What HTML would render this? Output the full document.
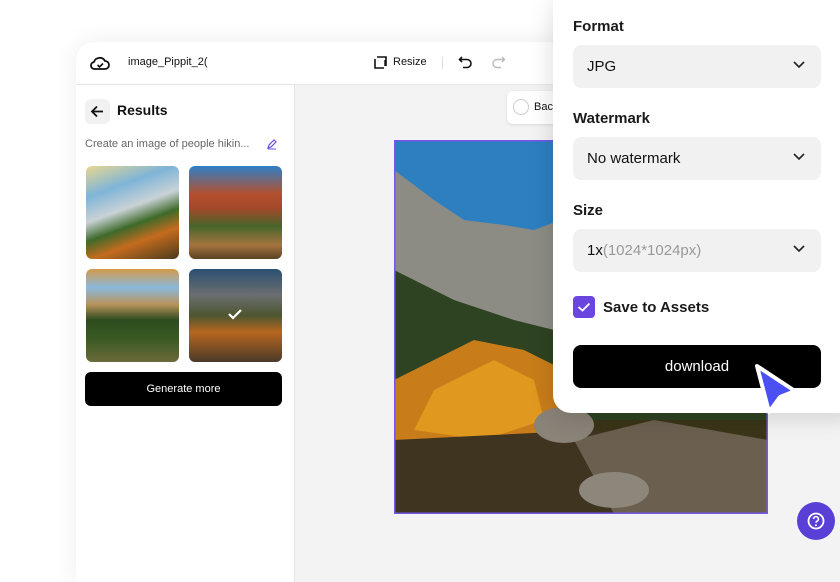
<!DOCTYPE html>
<html><head><style>
*{box-sizing:border-box;margin:0;padding:0}
body{width:840px;height:560px;overflow:hidden;background:#fff;font-family:"Liberation Sans",sans-serif;position:relative;color:#111}
.win{position:absolute;left:76px;top:42px;width:800px;height:540px;background:#f3f3f4;border-radius:18px 0 0 0;box-shadow:0 0 24px rgba(0,0,0,.08);overflow:hidden}
.hdr{position:absolute;left:0;top:0;right:0;height:43px;background:#fff;border-bottom:1px solid #e6e6e6}
.side{position:absolute;left:0;top:43px;width:219px;bottom:0;background:#fff;border-right:1px solid #e6e6e6}
.t{position:absolute;white-space:nowrap}
.thumb{position:absolute;width:93px;height:93px;border-radius:6px;overflow:hidden}
.panel{position:absolute;left:553px;top:0;width:300px;height:413px;background:#fff;border-radius:0 0 0 18px;box-shadow:0 4px 24px rgba(0,0,0,.15)}
.sel{position:absolute;left:20px;width:248px;height:43px;background:#f1f1f1;border-radius:8px;font-size:15px;padding:13px 0 0 14px}
.lab{position:absolute;left:20px;font-size:15px;font-weight:bold;color:#1a1a1a}
.chev{position:absolute;right:16px;top:16px}
</style></head><body>
<div class="win">
 <div class="hdr">
  <svg style="position:absolute;left:14px;top:12px" width="20" height="18" viewBox="0 0 20 18"><path d="M5 15h10a4 4 0 0 0 0-8 6 6 0 0 0-11 1 3.5 3.5 0 0 0 1 7z" fill="none" stroke="#111" stroke-width="1.8"/><path d="M7.5 11l2 2 3.5-3.5" fill="none" stroke="#111" stroke-width="1.6"/></svg>
  <div class="t" style="left:52px;top:14px;font-size:11px">image_Pippit_2(</div>
  <svg style="position:absolute;left:297px;top:13px" width="15" height="15" viewBox="0 0 15 15"><path d="M2 4v9h9M4 2h9v9" fill="none" stroke="#111" stroke-width="1.6"/><path d="M12 5v6" stroke="#111" stroke-width="1.4"/></svg>
  <div class="t" style="left:317px;top:14px;font-size:11px">Resize</div>
  <div style="position:absolute;left:366px;top:15px;width:1px;height:12px;background:#ddd"></div>
  <svg style="position:absolute;left:382px;top:12px" width="16" height="16" viewBox="0 0 16 16"><path d="M4 3L1.5 5.5 4 8M2 5.5h7a4 4 0 0 1 0 8H5" fill="none" stroke="#111" stroke-width="1.6"/></svg>
  <svg style="position:absolute;left:414px;top:12px" width="16" height="16" viewBox="0 0 16 16"><path d="M12 3l2.5 2.5L12 8M14 5.5H7a4 4 0 0 0 0 8h4" fill="none" stroke="#bbb" stroke-width="1.4"/></svg>
 </div>
 <div class="side">
  <div style="position:absolute;left:9px;top:14px;width:25px;height:25px;background:#f1f1f1;border-radius:6px"></div>
  <svg style="position:absolute;left:14px;top:19px" width="15" height="15" viewBox="0 0 15 15"><path d="M13 7.5H2M7 2.5l-5 5 5 5" fill="none" stroke="#111" stroke-width="1.8"/></svg>
  <div class="t" style="left:41px;top:17px;font-size:14px;font-weight:bold">Results</div>
  <div class="t" style="left:9px;top:53px;font-size:11px;color:#666">Create an image of people hikin...</div>
  <svg style="position:absolute;left:190px;top:53px" width="12" height="12" viewBox="0 0 12 12"><path d="M2 10l1-3 5-5 2 2-5 5z" fill="none" stroke="#6a4ee6" stroke-width="1.2"/><path d="M2 11h8" stroke="#6a4ee6"/></svg>
  <div class="thumb" style="left:10px;top:81px;background:linear-gradient(160deg,#e8d890 0%,#7fb4d8 25%,#c9d2d6 45%,#3e6a2a 60%,#c46b1e 75%,#4a3a1c 100%)"></div>
  <div class="thumb" style="left:113px;top:81px;background:linear-gradient(180deg,#2f7fc6 0%,#b4502e 30%,#a4482a 45%,#47662a 65%,#a57440 85%,#5a4224 100%)"></div>
  <div class="thumb" style="left:10px;top:184px;background:linear-gradient(180deg,#d29a4a 0%,#8ab8dc 20%,#b8935a 38%,#2d4c1f 55%,#3a5a22 75%,#6b6a3a 100%)"></div>
  <div class="thumb" style="left:113px;top:184px;background:linear-gradient(180deg,#2b5072 0%,#6b6e70 28%,#4d5630 50%,#b7661e 68%,#4a3a2a 100%)">
   <svg style="position:absolute;left:38px;top:39px" width="16" height="12" viewBox="0 0 16 12"><path d="M2 6l4 4 8-8" fill="none" stroke="#fff" stroke-width="2.2"/></svg></div>
  <div style="position:absolute;left:9px;top:287px;width:197px;height:34px;background:#000;border-radius:6px;color:#fff;font-size:11px;text-align:center;line-height:34px">Generate more</div>
 </div>
 <div style="position:absolute;left:431px;top:49px;width:80px;height:33px;background:#fff;border-radius:6px;box-shadow:0 1px 3px rgba(0,0,0,.1)"><div style="position:absolute;left:6px;top:8px;width:16px;height:16px;border:1px solid #ccc;border-radius:50%"></div><div class="t" style="left:27px;top:10px;font-size:11px">Bac</div></div>
 <svg style="position:absolute;left:318px;top:98px" width="374" height="374" viewBox="0 0 374 374">
  <rect width="374" height="374" fill="#3a3418"/>
  <rect width="374" height="140" fill="#2d7fc0"/>
  <path d="M0 30 L40 60 70 80 110 85 140 90 180 75 220 70 260 80 300 90 374 110 L374 270 0 270z" fill="#8d8c84"/>
  <path d="M160 100 L190 80 230 72 270 78 310 92 374 110 374 200 180 200z" fill="#c4beb1"/>
  <path d="M0 130 L60 160 120 180 200 200 374 200 374 280 0 280z" fill="#2e4322"/>
  <path d="M0 240 L80 200 130 210 170 230 200 260 160 300 0 300z" fill="#c87c1a"/>
  <path d="M40 250 L100 220 140 240 150 280 90 300 20 290z" fill="#e0981e"/>
  <path d="M0 300 L200 290 374 320 374 374 0 374z" fill="#3f3420"/>
  <path d="M180 300 L260 280 374 300 374 374 220 374z" fill="#6b6050"/>
  <ellipse cx="170" cy="285" rx="30" ry="18" fill="#8a8378"/>
  <ellipse cx="220" cy="350" rx="35" ry="18" fill="#8d877b"/>
  <rect x="0.5" y="0.5" width="373" height="373" fill="none" stroke="#7556e8" stroke-width="2"/>
 </svg>
</div>
<div class="panel">
 <div class="lab" style="top:18px">Format</div>
 <div class="sel" style="top:45px">JPG<svg class="chev" width="12" height="8" viewBox="0 0 12 8"><path d="M1 1l5 5 5-5" fill="none" stroke="#222" stroke-width="1.6"/></svg></div>
 <div class="lab" style="top:110px">Watermark</div>
 <div class="sel" style="top:137px">No watermark<svg class="chev" width="12" height="8" viewBox="0 0 12 8"><path d="M1 1l5 5 5-5" fill="none" stroke="#222" stroke-width="1.6"/></svg></div>
 <div class="lab" style="top:202px">Size</div>
 <div class="sel" style="top:229px">1x<span style="color:#999">(1024*1024px)</span><svg class="chev" width="12" height="8" viewBox="0 0 12 8"><path d="M1 1l5 5 5-5" fill="none" stroke="#222" stroke-width="1.6"/></svg></div>
 <div style="position:absolute;left:20px;top:296px;width:22px;height:22px;background:#6a45e0;border-radius:4px"><svg style="position:absolute;left:4px;top:6px" width="14" height="10" viewBox="0 0 14 10"><path d="M1.5 5l4 3.5 7-7" fill="none" stroke="#fff" stroke-width="1.8"/></svg></div>
 <div class="t" style="left:50px;top:299px;font-size:15px;font-weight:bold;color:#1a1a1a">Save to Assets</div>
 <div style="position:absolute;left:20px;top:345px;width:248px;height:43px;background:#000;border-radius:8px;color:#fff;font-size:15px;text-align:center;line-height:43px">download</div>
</div>
<svg style="position:absolute;left:748px;top:358px" width="56" height="62" viewBox="0 0 56 62"><path d="M9 8 L47 33 L32 39 L21 54z" fill="#4b50f2" stroke="#fff" stroke-width="4" stroke-linejoin="round"/></svg>
<div style="position:absolute;left:797px;top:502px;width:38px;height:38px;border-radius:50%;background:#5a3fd6"><svg style="position:absolute;left:9px;top:9px" width="20" height="20" viewBox="0 0 20 20"><circle cx="10" cy="10" r="7.5" fill="none" stroke="#fff" stroke-width="1.8"/><path d="M7.6 8a2.4 2.4 0 1 1 3.4 2.2c-.7.4-1 .8-1 1.6" fill="none" stroke="#fff" stroke-width="1.6"/><circle cx="10" cy="14.3" r="1" fill="#fff"/></svg></div>
</body></html>
